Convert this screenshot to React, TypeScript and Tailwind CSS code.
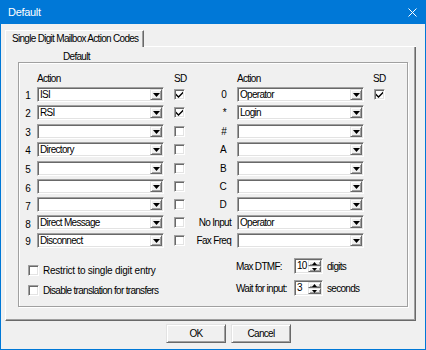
import React from "react";

const sunken =
  "border border-t-[#a0a0a0] border-l-[#a0a0a0] border-b-white border-r-white shadow-[inset_1px_1px_0_#696969,inset_-1px_-1px_0_#e3e3e3]";
const raised =
  "border border-t-[#e3e3e3] border-l-[#e3e3e3] border-b-[#696969] border-r-[#696969] shadow-[inset_1px_1px_0_#ffffff,inset_-1px_-1px_0_#a0a0a0]";

function Arrow() {
  return (
    <svg width="7" height="4" viewBox="0 0 7 4">
      <path d="M0 0h7L3.5 4z" fill="#000" />
    </svg>
  );
}

function Combo({ value }: { value?: string }) {
  return (
    <div className={`flex h-[15px] w-[127px] bg-white ${sunken}`}>
      <div className="flex-1 pl-[2px] leading-[13px] whitespace-nowrap overflow-hidden">
        {value}
      </div>
      <div className={`m-[1px] flex w-[12px] items-center justify-center bg-[#f0f0f0] ${raised}`}>
        <Arrow />
      </div>
    </div>
  );
}

function Check({ checked }: { checked?: boolean }) {
  return (
    <div className={`flex h-[11px] w-[11px] shrink-0 items-center justify-center bg-white ${sunken}`}>
      {checked && (
        <svg width="7" height="7" viewBox="0 0 7 7">
          <path d="M0 2.5L2.5 5L7 0.5V2.5L2.5 7L0 4.5z" fill="#000" />
        </svg>
      )}
    </div>
  );
}

function Spin({ value }: { value: string }) {
  return (
    <div className={`flex h-[16px] w-[29px] bg-white ${sunken}`}>
      <div className="flex-1 pl-[2px] leading-[14px]">{value}</div>
      <div className="m-[1px] flex w-[13px] flex-col">
        <div className={`flex flex-1 items-center justify-center bg-[#f0f0f0] ${raised}`}>
          <svg width="5" height="3" viewBox="0 0 5 3">
            <path d="M0 3h5L2.5 0z" fill="#000" />
          </svg>
        </div>
        <div className={`flex flex-1 items-center justify-center bg-[#f0f0f0] ${raised}`}>
          <svg width="5" height="3" viewBox="0 0 5 3">
            <path d="M0 0h5L2.5 3z" fill="#000" />
          </svg>
        </div>
      </div>
    </div>
  );
}

type Row = {
  n: string;
  lv?: string;
  lc?: boolean;
  r: string;
  rv?: string;
  rBox?: boolean;
  mt: string;
  nt: string;
  single: boolean;
};

const rows: Row[] = [
  { n: "1", lv: "ISI", lc: true, r: "0", rv: "Operator", rBox: true, mt: "mt-[2px]", nt: "pt-[2px]", single: true },
  { n: "2", lv: "RSI", lc: true, r: "*", rv: "Login", mt: "mt-[3px]", nt: "pt-[1px]", single: true },
  { n: "3", r: "#", mt: "mt-[4px]", nt: "pt-[1px]", single: true },
  { n: "4", lv: "Directory", r: "A", mt: "mt-[3px]", nt: "pt-[1px]", single: true },
  { n: "5", r: "B", mt: "mt-[4px]", nt: "pt-[1px]", single: true },
  { n: "6", r: "C", mt: "mt-[3px]", nt: "pt-[4px]", single: true },
  { n: "7", r: "D", mt: "mt-[3px]", nt: "pt-[3px]", single: true },
  { n: "8", lv: "Direct Message", r: "No Input", rv: "Operator", mt: "mt-[3px]", nt: "pt-[3px]", single: false },
  { n: "9", lv: "Disconnect", r: "Fax Freq", mt: "mt-[3px]", nt: "pt-[2px]", single: false },
];

export default function App() {
  return (
    <div className="flex h-[350px] w-[426px] flex-col bg-[#0078d7] px-[1px] pb-[1px] font-['Liberation_Sans',Arial,sans-serif] text-[10px] tracking-[-0.7px] text-black">
      {/* Title bar */}
      <div className="flex h-[24px] shrink-0 items-center justify-between">
        <span className="pl-[7px] text-[11px] leading-[14px] tracking-[-0.3px] text-white">Default</span>
        <svg className="mr-[8px]" width="9" height="9" viewBox="0 0 9 9">
          <path d="M0.5 0.5L8.5 8.5M8.5 0.5L0.5 8.5" stroke="#fff" strokeWidth="1" />
        </svg>
      </div>

      {/* Client */}
      <div className="flex flex-1 flex-col bg-[#f0f0f0] pl-[4px] pt-[6px]">
        {/* Tab header */}
        <div className="flex h-[17px] w-[411px]">
          <div className="flex w-[139px] items-center border-l border-t border-r border-l-white border-t-white border-r-[#696969] pl-[6px] shadow-[inset_-1px_0_0_#a0a0a0] leading-[12px] whitespace-nowrap">
            Single Digit Mailbox Action Codes
          </div>
          <div className="flex-1 border-b border-b-white" />
        </div>

        {/* Tab panel */}
        <div className="flex h-[274px] w-[411px] flex-col border-l border-r border-b border-l-white border-r-[#696969] border-b-[#696969] shadow-[inset_-1px_-1px_0_#a0a0a0]">
          <div className="ml-[57px] mt-[5px] h-[10px] leading-[10px]">Default</div>

          {/* Group box */}
          <div className="ml-[12px] flex h-[245px] w-[390px] flex-col border border-[#a0a0a0] shadow-[1px_1px_0_#ffffff,inset_1px_1px_0_#ffffff]">
            {/* Header */}
            <div className="mt-[10px] flex h-[12px] leading-[12px]">
              <span className="ml-[18px] w-[137px]">Action</span>
              <span className="w-[63px]">SD</span>
              <span className="w-[136px]">Action</span>
              <span>SD</span>
            </div>

            {rows.map((row) => (
              <div key={row.n} className={`flex h-[15px] items-center ${row.mt}`}>
                <div className={`w-[18px] pr-[7px] text-right ${row.nt}`}>{row.n}</div>
                <Combo value={row.lv} />
                <div className="w-[10px]" />
                <Check checked={row.lc} />
                <div
                  className={`w-[52px] whitespace-nowrap text-right ${
                    row.single ? "pr-[11px]" : "pr-[6px]"
                  }`}
                >
                  {row.r}
                </div>
                <Combo value={row.rv} />
                <div className="w-[10px]" />
                {row.rBox && <Check checked />}
              </div>
            ))}

            {/* Bottom options */}
            <div className="mt-[10px] flex">
              <div className="flex w-[217px] flex-col pl-[9px]">
                <div className="mt-[6px] flex h-[12px] items-center gap-[4px]">
                  <Check />
                  <span className="whitespace-nowrap tracking-[-0.25px]">Restrict to single digit entry</span>
                </div>
                <div className="mt-[8px] flex h-[12px] items-center gap-[4px]">
                  <Check />
                  <span className="whitespace-nowrap">Disable translation for transfers</span>
                </div>
              </div>
              <div className="flex flex-col">
                <div className="flex h-[16px] items-center">
                  <span className="w-[58px] whitespace-nowrap">Max DTMF:</span>
                  <Spin value="10" />
                  <span className="ml-[4px]">digits</span>
                </div>
                <div className="mt-[6px] flex h-[16px] items-center">
                  <span className="w-[58px] whitespace-nowrap">Wait for input:</span>
                  <Spin value="3" />
                  <span className="ml-[4px]">seconds</span>
                </div>
              </div>
            </div>
          </div>
        </div>

        {/* Buttons */}
        <div className="ml-[161px] mt-[3px] flex gap-[5px]">
          <button className={`h-[19px] w-[60px] bg-[#f0f0f0] leading-[12px] ${raised}`}>OK</button>
          <button className={`h-[19px] w-[60px] bg-[#f0f0f0] leading-[12px] ${raised}`}>Cancel</button>
        </div>
      </div>
    </div>
  );
}
